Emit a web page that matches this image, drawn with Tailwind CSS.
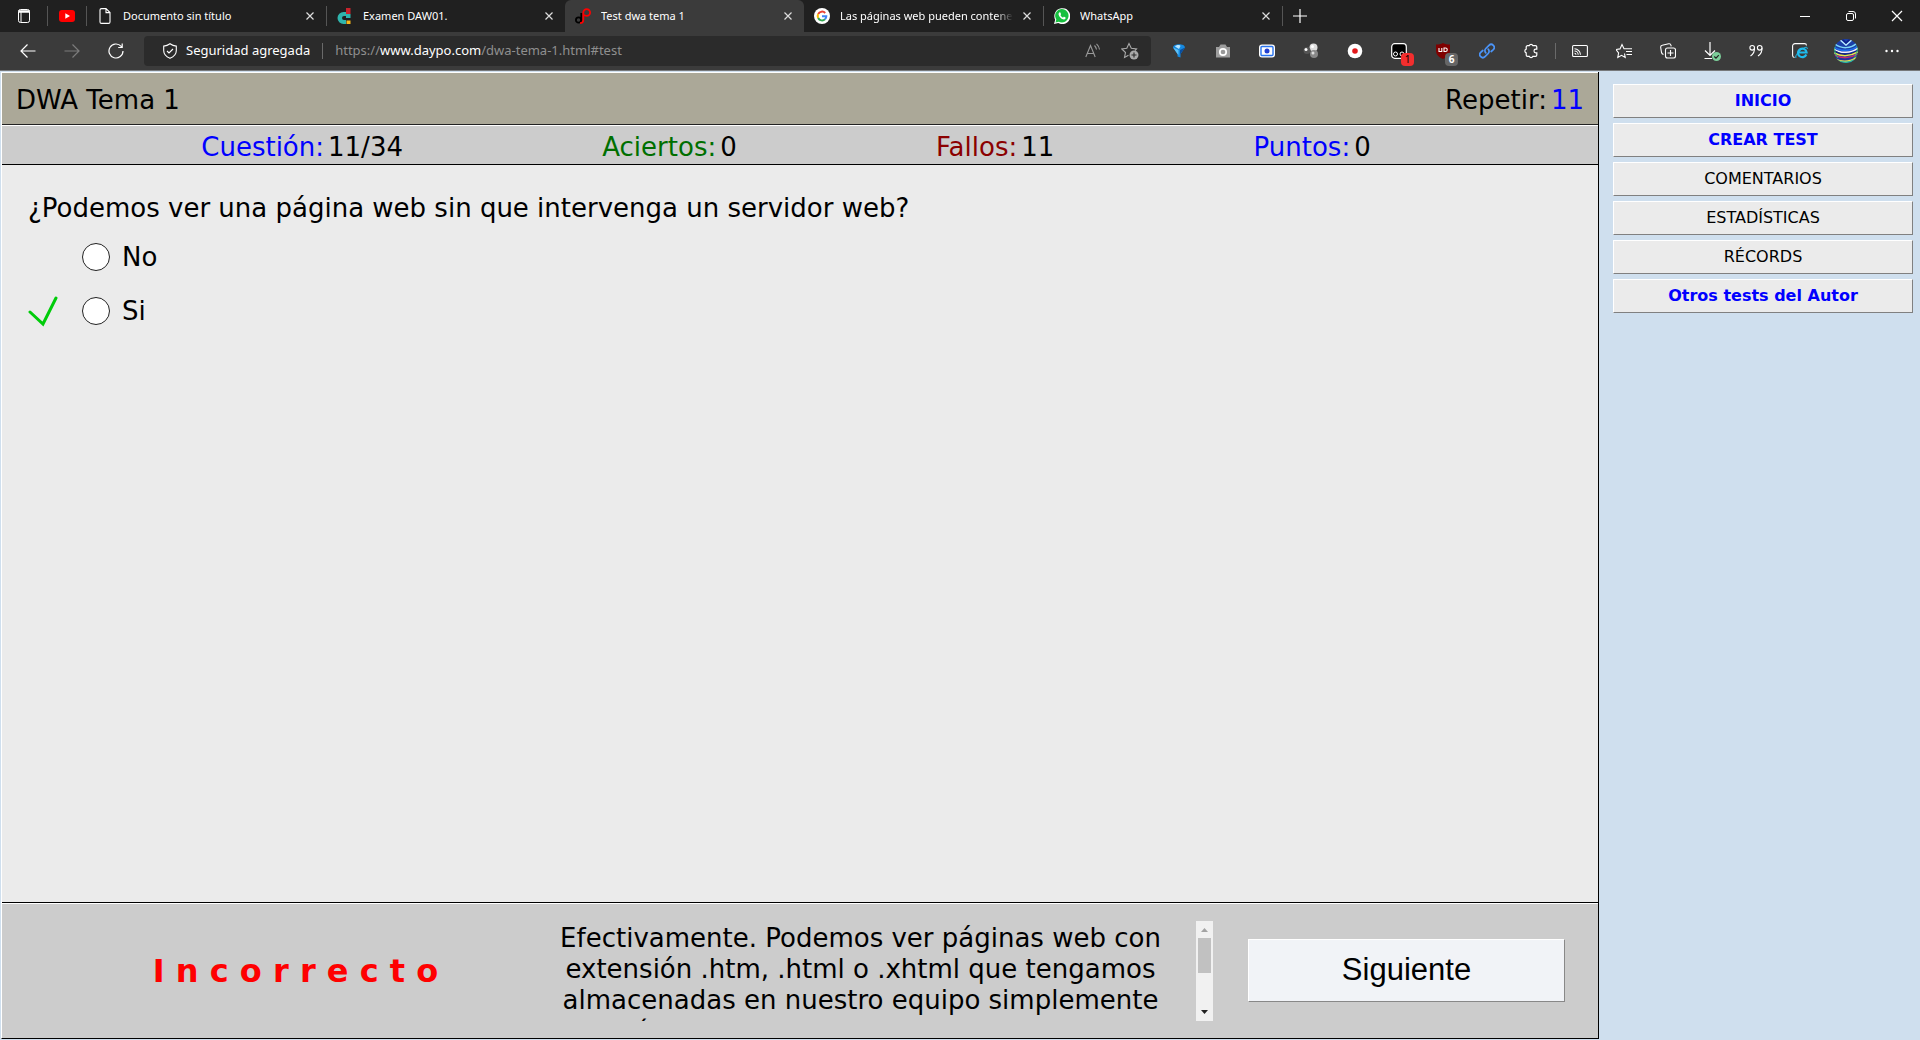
<!DOCTYPE html>
<html lang="es">
<head>
<meta charset="utf-8">
<title>Test dwa tema 1</title>
<script src="https://cdn.jsdelivr.net/npm/@tailwindcss/browser@4"></script>
</head>
<body class="flex min-h-screen flex-col bg-[#cfdfee] text-black">

<!-- Browser window -->
<header class="border-b border-[#77797b] bg-[#3b3b3b] font-['Noto_Sans',sans-serif] text-white">
  <!-- Tab strip -->
  <div class="flex h-8 items-stretch bg-[#202020] text-[11px]">
    <div class="flex w-[47px] items-center pl-4">
      <button aria-label="Menú de pestañas" class="flex size-4 items-center justify-center"><svg viewBox="0 0 16 16" class="size-4" fill="none" stroke="#fff"><rect x="2.5" y="1.5" width="11" height="13" rx="2"/><path d="M2.500 3.500h11" stroke-width="2.500"/><path d="M5 4v10" /></svg></button>
    </div>
    <div class="my-auto h-5 w-px bg-[#555]"></div>
    <div class="flex w-[38px] items-center justify-center">
      <button aria-label="YouTube" class="size-4"><svg viewBox="0 0 16 16" class="size-4"><rect y="2" width="16" height="12" rx="3" fill="#f00"/><path d="M6.3 5.2v5.6L11 8z" fill="#fff"/></svg></button>
    </div>
    <div class="my-auto h-5 w-px bg-[#555]"></div>

    <nav class="flex min-w-0 items-stretch" aria-label="Pestañas">
      <div class="flex w-[239px] items-center gap-[10px] pr-2 pl-[10px]">
        <svg viewBox="0 0 16 16" class="size-4 shrink-0" fill="none" stroke="#fff" stroke-width="1.1"><path d="M9 .6H4.5a1.5 1.5 0 0 0-1.500 1.500v11.800a1.500 1.500 0 0 0 1.500 1.500h7a1.500 1.500 0 0 0 1.500-1.500V4.600zM9 .6v4h4"/></svg>
        <a href="#" class="min-w-0 flex-1 overflow-hidden whitespace-nowrap">Documento sin título</a>
        <button aria-label="Cerrar" class="size-4 shrink-0"><svg viewBox="0 0 16 16" class="size-4" stroke="#ddd" stroke-width="1.2"><path d="M4.500 4.500l7 7M11.500 4.500l-7 7"/></svg></button>
      </div>
      <div class="flex w-[239px] items-center gap-[10px] pr-2">
        <div class="h-5 w-px bg-[#555]"></div>
        <svg viewBox="0 0 16 16" class="size-4 shrink-0"><path d="M9 0h4.500v6H9z" fill="#c8232c"/><path d="M9 4H6.500a6 6 0 0 0 0 12H9v-4H7a2 2 0 0 1 0-4h2v2h4.500V6H9z" fill="#2fb5ad"/><path d="M9.500 12.500h4V16h-4z" fill="#f7b719"/></svg>
        <a href="#" class="min-w-0 flex-1 overflow-hidden whitespace-nowrap">Examen DAW01.</a>
        <button aria-label="Cerrar" class="size-4 shrink-0"><svg viewBox="0 0 16 16" class="size-4" stroke="#ddd" stroke-width="1.2"><path d="M4.500 4.500l7 7M11.500 4.500l-7 7"/></svg></button>
      </div>
      <div class="flex w-[239px] items-center gap-[10px] rounded-t-md bg-[#3b3b3b] pr-2 pl-[10px]">
        <svg viewBox="0 0 16 16" class="size-4 shrink-0" fill="none" stroke-width="1.800"><circle cx="3.600" cy="12" r="2.700" stroke="#000"/><path d="M6.300 14V5" stroke="#000"/><path d="M5 15.100c2.500 0 3.300-1.200 3.300-3.600V4.500a3.400 3.400 0 1 1 3.400 3.400c-1.500 0-2.500-.4-3.400-1.400" stroke="#f00"/></svg>
        <a href="#" aria-current="page" class="min-w-0 flex-1 overflow-hidden whitespace-nowrap">Test dwa tema 1</a>
        <button aria-label="Cerrar" class="size-4 shrink-0"><svg viewBox="0 0 16 16" class="size-4" stroke="#ddd" stroke-width="1.2"><path d="M4.500 4.500l7 7M11.500 4.500l-7 7"/></svg></button>
      </div>
      <div class="flex w-[239px] items-center gap-[10px] pr-2 pl-[10px]">
        <svg viewBox="0 0 16 16" class="size-4 shrink-0" fill="none" stroke-width="2"><circle cx="8" cy="8" r="8" fill="#fff"/><path d="M11.200 5A4.300 4.300 0 0 0 4.200 6" stroke="#ea4335"/><path d="M4.200 6a4.300 4.300 0 0 0 0 4" stroke="#fbbc05"/><path d="M4.200 10a4.300 4.300 0 0 0 6.800 1.300" stroke="#34a853"/><path d="M8 8.200h4.300a4.300 4.300 0 0 1-1.300 3.100" stroke="#4285f4"/></svg>
        <a href="#" class="-mr-1 min-w-0 flex-1 overflow-hidden whitespace-nowrap [mask-image:linear-gradient(to_right,#000_90%,transparent)]">Las páginas web pueden contener</a>
        <button aria-label="Cerrar" class="size-4 shrink-0"><svg viewBox="0 0 16 16" class="size-4" stroke="#ddd" stroke-width="1.2"><path d="M4.500 4.500l7 7M11.500 4.500l-7 7"/></svg></button>
      </div>
      <div class="flex w-[239px] items-center gap-[10px] pr-2">
        <div class="h-5 w-px bg-[#555]"></div>
        <svg viewBox="0 0 16 16" class="size-4 shrink-0"><path d="M0 16l1.200-4.200A8 8 0 1 1 4.200 15z" fill="#fff"/><path d="M1.500 14.500l.8-3A6.700 6.700 0 1 1 4.800 13.700z" fill="#17c03f"/><path d="M5.300 4.500c-1.600 1.500-.3 3.700 1.200 5.200 1.700 1.600 4 2.500 5 .8.400-.900.100-1-1.300-1.700-.8-.3-.8.900-1.500.7C7.600 9 6.900 8.200 6.500 7.300c-.2-.5.700-.7.500-1.300-.6-1.500-.7-2-1.700-1.500z" fill="#fff"/></svg>
        <a href="#" class="min-w-0 flex-1 overflow-hidden whitespace-nowrap">WhatsApp</a>
        <button aria-label="Cerrar" class="size-4 shrink-0"><svg viewBox="0 0 16 16" class="size-4" stroke="#ddd" stroke-width="1.2"><path d="M4.500 4.500l7 7M11.500 4.500l-7 7"/></svg></button>
      </div>
    </nav>
    <div class="my-auto h-5 w-px bg-[#555]"></div>
    <button aria-label="Nueva pestaña" class="ml-[9px] self-center"><svg viewBox="0 0 16 16" class="size-4" stroke="#fff" stroke-width="1.200"><path d="M8 1v14M1 8h14"/></svg></button>
    <div class="ml-auto flex items-stretch">
      <button aria-label="Minimizar" class="flex w-[46px] items-center justify-center"><svg viewBox="0 0 12 12" class="size-3" stroke="#fff"><path d="M1 6.500h10"/></svg></button>
      <button aria-label="Restaurar" class="flex w-[46px] items-center justify-center"><svg viewBox="0 0 12 12" class="size-3" fill="none" stroke="#fff"><rect x="1.500" y="3.500" width="7" height="7" rx="1.500"/><path d="M3.500 1.500H8a2.500 2.500 0 0 1 2.500 2.500v4.500"/></svg></button>
      <button aria-label="Cerrar ventana" class="flex w-[46px] items-center justify-center"><svg viewBox="0 0 12 12" class="size-3" stroke="#fff" stroke-width="1.200"><path d="M1 1l10 10M11 1L1 11"/></svg></button>
    </div>
  </div>

  <!-- Toolbar -->
  <div class="flex h-[38px] items-center pl-[6px]">
    <button aria-label="Atrás" class="flex w-11 justify-center"><svg viewBox="0 0 16 16" class="size-4" fill="none" stroke="#fff" stroke-width="1.200"><path d="M15.500 8H1M7.500 1.500L1 8l6.500 6.500"/></svg></button>
    <button aria-label="Adelante" class="flex w-11 justify-center"><svg viewBox="0 0 16 16" class="size-4" fill="none" stroke="#7c7c7c" stroke-width="1.200"><path d="M.5 8H15M8.500 1.500L15 8l-6.500 6.500"/></svg></button>
    <button aria-label="Actualizar" class="flex w-11 justify-center"><svg viewBox="0 0 16 16" class="size-4" fill="none" stroke="#fff" stroke-width="1.200"><path d="M15 8a7 7 0 1 1-1.800-4.700L14 4.500M14.200.5v4h-4"/></svg></button>
    <div class="ml-[6px] flex h-[30px] min-w-0 flex-1 items-center rounded bg-[#2b2b2b] pr-3 pl-[18px] text-[13px]">
      <svg viewBox="0 0 16 16" class="size-4 shrink-0" fill="none" stroke="#fff" stroke-width="1.100"><path d="M8 .8c2 1.500 4 2.200 6.300 2.300v4.500c0 3.600-2.300 6.200-6.300 7.700-4-1.500-6.300-4.100-6.300-7.700V3.100C4 3 6 2.300 8 .8zM5 8l2 2 4-4"/></svg>
      <span class="ml-2 whitespace-nowrap">Seguridad agregada</span>
      <div class="mx-3 h-4 w-px bg-[#6a6a6a]"></div>
      <div class="flex-1 whitespace-nowrap text-[#8f8f8f]">https://<span class="text-white">www.daypo.com</span>/dwa-tema-1.html#test</div>
      <button aria-label="Leer en voz alta" class="mr-5"><svg viewBox="0 0 16 16" class="size-4" fill="none" stroke="#999" stroke-width="1.100"><path d="M.8 14L5.500 2.500 10.200 14M2.500 10.500h6M9.500 2.500c1 1 1.700 2.200 2 4M11.500.8c1.700 1.500 2.700 3.400 3 5.700"/></svg></button>
      <button aria-label="Agregar a favoritos"><svg viewBox="0 0 18 18" class="size-[18px]" fill="none" stroke="#aaa" stroke-width="1.100"><path d="M7.500 13.200L3.500 15.500l1-5L.8 7l5-.7L8 1.500l2.300 4.800 5.200.7-1.500 1.500"/><circle cx="13" cy="13" r="4.500" fill="#aaa" stroke="none"/><path d="M13 10.500v5M10.500 13h5" stroke="#2b2b2b"/></svg></button>
    </div>
    <div class="ml-[6px] flex items-center">
      <button aria-label="Diamante" class="flex w-11 justify-center"><svg viewBox="0 0 16 16" class="size-4"><path d="M2 4.500C2 0 14 0 14 4.500L9.500 11v3.500l-3-1V11z" fill="#1689e0"/><path d="M4 3.500c1-2 5-2 5.500-.5L8 6z" fill="#b9e6ff"/><path d="M14 4.500L9 7v4l.5 0z" fill="#0a4fa0"/><path d="M2 4.500L7.500 7v5L6.500 11z" fill="#5cc0f5"/></svg></button>
      <button aria-label="Captura" class="flex w-11 justify-center"><svg viewBox="0 0 16 16" class="size-4"><path d="M1 4h3l1.500-2.500h5L12 4h3v10.500H1z" fill="#9d9d9d"/><circle cx="8" cy="9" r="3.200" fill="#999" stroke="#fff" stroke-width="1.700"/></svg></button>
      <button aria-label="Grabadora" class="flex w-11 justify-center"><svg viewBox="0 0 16 16" class="size-4"><rect y="1.500" width="16" height="13" rx="3" fill="#fff"/><rect x="2" y="3.500" width="12" height="9" rx="1" fill="none" stroke="#2873ee" stroke-width="1.400"/><circle cx="8" cy="8" r="2.500" fill="#213ed0"/></svg></button>
      <button aria-label="Esferas" class="flex w-11 justify-center"><svg viewBox="0 0 16 16" class="size-4"><circle cx="10.500" cy="4.500" r="4" fill="#ddd"/><circle cx="9.500" cy="3.500" r="1.500" fill="#fff"/><circle cx="4" cy="7.500" r="3.500" fill="#555"/><circle cx="3" cy="6.500" r="1.500" fill="#fff"/><circle cx="11" cy="11" r="4" fill="#888"/><circle cx="10" cy="10" r="1.500" fill="#ddd"/></svg></button>
      <button aria-label="Grabar" class="flex w-11 justify-center"><svg viewBox="0 0 16 16" class="size-4"><circle cx="8" cy="8" r="7.300" fill="#fff"/><circle cx="8" cy="8" r="2.800" fill="#e3191b"/></svg></button>
      <button aria-label="Tampermonkey, 1" class="relative flex w-11 justify-center"><svg viewBox="0 0 16 16" class="size-4"><rect x=".7" y=".7" width="14.600" height="14.600" rx="3" fill="#000" stroke="#fff" stroke-width="1.200"/><circle cx="4.500" cy="11" r="2" fill="none" stroke="#fff"/><circle cx="11" cy="11" r="2" fill="none" stroke="#fff"/></svg><span class="absolute top-[10px] left-6 flex size-[13px] items-center justify-center rounded-sm bg-[#f22e2e] text-[10px] text-black">1</span></button>
      <button aria-label="uBlock, 6" class="relative flex w-11 justify-center"><svg viewBox="0 0 16 16" class="size-4"><path d="M8 0c2 1 4.500 1.500 7 1.500v6c0 4-2.500 6.500-7 8.500-4.500-2-7-4.500-7-8.500v-6C3.500 1.500 6 1 8 0z" fill="#800000"/><path d="M4 5v3.500h2.800V5M9 5h1.500a1.700 1.700 0 0 1 0 3.500H9z" fill="none" stroke="#fff" stroke-width="1.100"/></svg><span class="absolute top-[10px] left-6 flex size-[13px] items-center justify-center rounded-sm bg-[#666] text-[10px] font-bold">6</span></button>
      <button aria-label="Enlace" class="flex w-11 justify-center"><svg viewBox="0 0 16 16" class="size-4" fill="none" stroke="#4b94f8" stroke-width="1.700" stroke-linecap="round"><path d="M6.800 9.800a3 3 0 0 1 0-4.300l3.200-3.200a3 3 0 0 1 4.300 4.300L12.200 8.500M9.200 6.200a3 3 0 0 1 0 4.300L6 13.700a3 3 0 0 1-4.300-4.300L3.800 7.500"/></svg></button>
      <button aria-label="Extensiones" class="flex w-11 justify-center"><svg viewBox="0 0 16 16" class="size-4" fill="none" stroke="#fff" stroke-width="1.200"><path d="M3.200 4A1.300 1.300 0 0 1 4.500 2.700h1.700a2 2 0 0 1 3.700 0h2.600a1.300 1.300 0 0 1 1.300 1.300v2.200h-1a1.800 1.800 0 0 0 0 3.600h1V12a1.300 1.300 0 0 1-1.300 1.300H9.900a2 2 0 0 1-3.700 0H4.500A1.300 1.300 0 0 1 3.200 12V9.900a2 2 0 0 1 0-3.800z"/></svg></button>
    </div>
    <div class="mx-[2px] h-4 w-px bg-[#6a6a6a]"></div>
    <div class="flex items-center">
      <button aria-label="Transmitir" class="flex w-11 justify-center"><svg viewBox="0 0 16 16" class="size-4" fill="none" stroke="#fff" stroke-width="1.100"><rect x=".6" y="2.500" width="14.800" height="11" rx="1"/><path d="M2.500 10.200a1.500 1.500 0 0 1 1.500 1.500M2.500 8a3.700 3.700 0 0 1 3.700 3.700M2.500 5.800a6 6 0 0 1 6 5.900"/></svg></button>
      <button aria-label="Favoritos" class="flex w-11 justify-center"><svg viewBox="0 0 16 16" class="size-4" fill="none" stroke="#fff" stroke-width="1.100"><path d="M8.500 10.500l.7 4-3.700-2.200-3.700 2.200.8-4.700L0 6.500l4-.6L6 1.500l2 4.300h8M10 8.500h6M10.500 11.500H16"/></svg></button>
      <button aria-label="Colecciones" class="flex w-11 justify-center"><svg viewBox="0 0 16 16" class="size-4" fill="none" stroke="#fff" stroke-width="1.100"><rect x="5.500" y="5" width="10" height="10" rx="2"/><path d="M10.500 7v6M7.500 10h6M3.500 11.500c-1.500-.5-1.800-1.200-2-2L.7 4.500c-.2-1.300.5-2 1.500-2.200l6.500-1.500c1.300-.3 2 .3 2.300 1.500l.2 1"/></svg></button>
      <button aria-label="Descargas" class="flex w-11 justify-center"><svg viewBox="0 0 18 20" class="h-5 w-[18px]" fill="none" stroke="#fff" stroke-width="1.200"><path d="M7 1v13M2 9.500L7 14.500l5-5M1.500 17.500H9"/><circle cx="13.500" cy="15.500" r="4.500" fill="#7ccf9a" stroke="none"/><path d="M11.300 15.500l1.700 1.700 2.800-3" stroke="#222"/></svg></button>
      <button aria-label="Citas" class="flex w-11 justify-center"><svg viewBox="0 0 16 16" class="size-4" fill="none" stroke="#fff" stroke-width="1.100"><circle cx="4.200" cy="4.800" r="2.300"/><path d="M6.500 4.800c.3 3.700-1 6.200-4 8.200"/><circle cx="11.700" cy="4.800" r="2.300"/><path d="M14 4.800c.3 3.700-1 6.200-4 8.200"/></svg></button>
      <button aria-label="Modo Internet Explorer" class="flex w-11 justify-center"><svg viewBox="0 0 16 16" class="size-4" fill="none"><path d="M2.500 14.500A2 2 0 0 1 .6 12.500V3A2.400 2.400 0 0 1 3 .6h9.500A2 2 0 0 1 14.500 2.500" stroke="#fff" stroke-width="1.100"/><path d="M14.300 11.500A4.300 4.300 0 1 1 14.600 9.500H6.500" stroke="#1ebbee" stroke-width="2.200"/><path d="M4 15c-1.500-2 3-8 9-10.500 2-.7 2.500 0 2.200 1.500" stroke="#1ebbee"/></svg></button>
      <button aria-label="Perfil" class="flex w-12 justify-center"><svg viewBox="0 0 24 24" class="size-6" fill="none"><defs><clipPath id="avatar"><circle cx="12" cy="12" r="12"/></clipPath></defs><g clip-path="url(#avatar)" stroke-width="1.500"><path d="M0 0h24v24H0z" fill="#1a3fa8"/><path d="M5 0l7 6 7-6" stroke="#b7e8ff"/><path d="M8 0l4 4 4-4" stroke="#0d1f8a"/><path d="M1 5c6 5 16 5 22-1" stroke="#7fd7f5"/><path d="M0 8c7 5 17 4 24-1" stroke="#1d6ff0"/><path d="M0 10c7 5 17 4 24-1" stroke="#f4f0ff"/><path d="M0 12c8 5 17 4 24 0" stroke="#142074"/><path d="M0 14c8 4 17 3 24-1" stroke="#e8e34a"/><path d="M0 16c8 4 17 3 24-1" stroke="#c8286a"/><path d="M1 18c8 4 15 3 23-1" stroke="#2a2f9a"/><path d="M1 20c8 4 15 3 23-2" stroke="#ece04a"/><path d="M4 22c6 2 11 2 16-1" stroke="#2fb8a0"/><path d="M1 6c-1 5 0 9 3 13M23 6c1 5 0 9-3 13" stroke="#35c46a" stroke-width="1"/></g></svg></button>
      <button aria-label="Configuración y más" class="mr-[6px] flex w-11 justify-center"><svg viewBox="0 0 16 16" class="size-4" fill="#fff"><circle cx="2.500" cy="8" r="1.200"/><circle cx="8" cy="8" r="1.200"/><circle cx="13.500" cy="8" r="1.200"/></svg></button>
    </div>
  </div>
</header>

<!-- Web page -->
<div class="flex flex-1 items-stretch pt-px pb-px pl-px font-['DejaVu_Sans',sans-serif]">
  <main class="flex min-w-0 flex-1 flex-col border-r border-b border-l border-r-black border-b-black border-l-white bg-[#ebebeb] text-[26px]">
    <div class="flex h-[53px] items-center justify-between border-t border-b border-t-white border-b-[#222] bg-[#aba898] px-[14px] pt-1">
      <h1>DWA Tema 1</h1>
      <div class="flex gap-1">Repetir:<a href="#" class="text-[#00f]">11</a></div>
    </div>
    <dl class="flex h-10 items-center justify-evenly border-t border-b border-t-white border-b-black bg-[#ccc] pt-1 pr-7">
      <div class="flex gap-1"><dt class="text-[#00f]">Cuestión:</dt><dd>11/34</dd></div>
      <div class="flex gap-1"><dt class="text-[#006f00]">Aciertos:</dt><dd>0</dd></div>
      <div class="flex gap-1"><dt class="text-[#8b0000]">Fallos:</dt><dd>11</dd></div>
      <div class="flex gap-1"><dt class="text-[#00f]">Puntos:</dt><dd>0</dd></div>
    </dl>

    <div class="flex-1 px-[26px] pt-[25px]" role="radiogroup" aria-labelledby="pregunta">
      <p id="pregunta" class="leading-9">¿Podemos ver una página web sin que intervenga un servidor web?</p>
      <div class="mt-1 flex flex-col">
        <label class="flex h-[54px] items-center"><span class="w-[54px]"></span><input type="radio" name="respuesta" class="size-7 appearance-none rounded-full border border-[#222] bg-white"><span class="ml-3">No</span></label>
        <label class="flex h-[54px] items-center"><span class="w-[54px]"><svg viewBox="0 0 32 32" class="size-8" fill="none" stroke="#00cc0a" stroke-width="3" stroke-linecap="round"><path d="M2 17l13 12L28 3"/></svg></span><input type="radio" name="respuesta" class="size-7 appearance-none rounded-full border border-[#222] bg-white"><span class="ml-3">Si</span></label>
      </div>
    </div>

    <section class="flex h-[136px] items-center border-t border-black bg-[#ccc] shadow-[inset_0_1px_0_#fff]">
      <strong class="flex-1 pl-12 text-center text-[32px] whitespace-nowrap text-[#f00]">I n c o r r e c t o</strong>
      <div class="flex h-[100px] w-[672px] overflow-hidden">
        <p class="flex-1 pt-[2px] text-center leading-[31px]">Efectivamente. Podemos ver páginas web con extensión .htm, .html o .xhtml que tengamos almacenadas en nuestro equipo simplemente así, con un programa que nos muestre</p>
        <div class="ml-4 flex h-full w-[17px] shrink-0 flex-col items-center bg-[#f1f1f1]">
          <svg viewBox="0 0 17 17" class="size-[17px]" fill="#a3a3a3"><path d="M5 11h7L8.500 7z"/></svg>
          <div class="h-[35px] w-[13px] bg-[#c1c1c1]"></div>
          <svg viewBox="0 0 17 17" class="mt-auto size-[17px]" fill="#222"><path d="M5 6h7L8.500 10z"/></svg>
        </div>
      </div>
      <button class="mr-[33px] ml-[35px] h-[63px] w-[317px] border border-t-white border-r-[#888] border-b-[#888] border-l-white bg-[#f1f3f7] font-['Liberation_Sans',sans-serif] text-[31px]">Siguiente</button>
    </section>
  </main>

  <nav class="flex w-[321px] shrink-0 flex-col gap-[5px] pt-3 pr-[7px] pl-[14px] text-[16px]" aria-label="Menú">
    <a href="#" class="flex h-[34px] items-center justify-center border border-t-white border-r-[#808080] border-b-[#808080] border-l-white bg-[#ebebeb] font-bold text-[#00f]">INICIO</a>
    <a href="#" class="flex h-[34px] items-center justify-center border border-t-white border-r-[#808080] border-b-[#808080] border-l-white bg-[#ebebeb] font-bold text-[#00f]">CREAR TEST</a>
    <a href="#" class="flex h-[34px] items-center justify-center border border-t-white border-r-[#808080] border-b-[#808080] border-l-white bg-[#ebebeb]">COMENTARIOS</a>
    <a href="#" class="flex h-[34px] items-center justify-center border border-t-white border-r-[#808080] border-b-[#808080] border-l-white bg-[#ebebeb]">ESTADÍSTICAS</a>
    <a href="#" class="flex h-[34px] items-center justify-center border border-t-white border-r-[#808080] border-b-[#808080] border-l-white bg-[#ebebeb]">RÉCORDS</a>
    <a href="#" class="flex h-[34px] items-center justify-center border border-t-white border-r-[#808080] border-b-[#808080] border-l-white bg-[#ebebeb] font-bold text-[#00f]">Otros tests del Autor</a>
  </nav>
</div>
</body>
</html>
